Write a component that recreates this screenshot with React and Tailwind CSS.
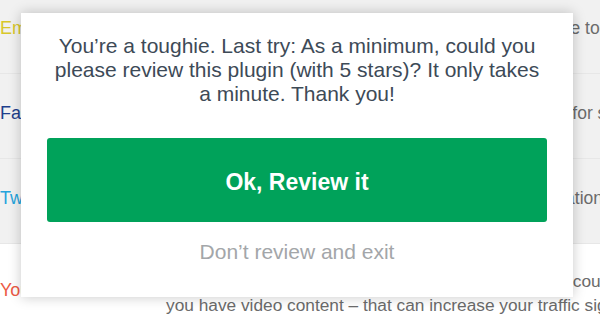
import React from 'react'

const rows = [
    { label: 'Email', color: 'text-[#d8c72a]', text: 'Send the page by email with the tools', width: 'w-[456px]' },
    { label: 'Facebook', color: 'text-[#1e3f8c]', text: 'Show a like button on posts for sharing', width: 'w-[489px]' },
    { label: 'Twitter', color: 'text-[#25a3dc]', text: 'Tweet posts with a notification', width: 'w-[437px]' },
]

const App = () => {
    return (
        <div className="relative w-[600px] h-[323px] overflow-hidden bg-white font-['Liberation_Sans',Arial,sans-serif]">
            {/* page behind the popup */}
            <div className="mt-[-11px]">
                {rows.map((row) => (
                    <div key={row.label} className="flex items-center h-[85px] bg-[#f1f1f1] border-b border-[#e7e7e7] pb-[6px]">
                        <div className={`w-[166px] shrink-0 text-[18px] ${row.color}`}>{row.label}</div>
                        <div className={`${row.width} shrink-0 flex justify-end whitespace-nowrap text-[17.5px] text-[#6b6b6b]`}>{row.text}</div>
                    </div>
                ))}
                <div className="flex pt-[25px] text-[17.3px] leading-[24px]">
                    <div className="w-[166px] shrink-0 pt-[9px] text-[18px] text-[#ec5a45]">YouTube</div>
                    <div className="text-[#6b6b6b] whitespace-nowrap">
                        <div className="w-[499px] flex justify-end">Add your channel and uploads. It could help if</div>
                        <div>you have video content – that can increase your traffic signals</div>
                    </div>
                </div>
            </div>

            {/* review popup */}
            <div className="absolute left-[21px] top-[13px] w-[552px] h-[284px] bg-white shadow-[0_0_12px_rgba(0,0,0,0.22)] flex flex-col">
                <p className="px-[30px] pt-[21px] text-center text-[21px] leading-[24px] text-[#3d4a57]">
                    You’re a toughie. Last try: As a minimum, could you please review this plugin (with 5 stars)? It only takes a minute. Thank you!
                </p>
                <button className="mx-[26px] mt-[32px] h-[84px] pt-[5px] rounded-[3px] bg-[#00a25a] text-white font-bold text-[23px]">
                    Ok, Review it
                </button>
                <button className="mt-[18px] text-[21px] leading-[24px] text-[#a3a6a9]">
                    Don’t review and exit
                </button>
            </div>
        </div>
    )
}

export default App
